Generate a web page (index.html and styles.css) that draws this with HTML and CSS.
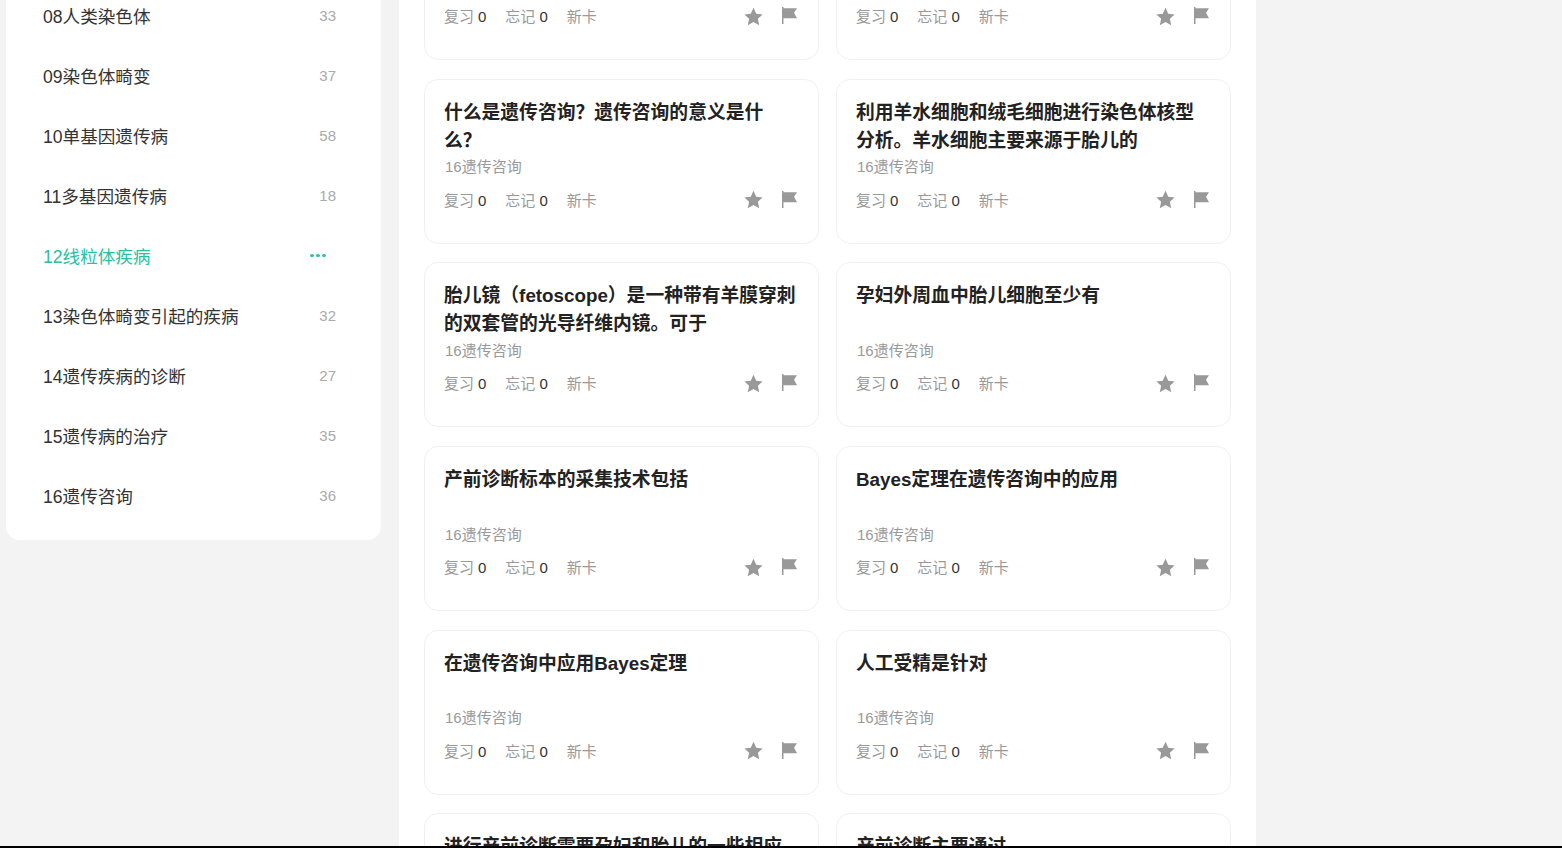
FILE: index.html
```html
<!DOCTYPE html>
<html lang="zh">
<head>
<meta charset="utf-8">
<title>遗传咨询</title>
<link rel="stylesheet" href="styles.css">
</head>
<body>
<div class="page">
  <aside class="sidebar">
    <ul class="chapters">
      <li class="chapter"><span>08人类染色体</span><span class="count">33</span></li>
      <li class="chapter"><span>09染色体畸变</span><span class="count">37</span></li>
      <li class="chapter"><span>10单基因遗传病</span><span class="count">58</span></li>
      <li class="chapter"><span>11多基因遗传病</span><span class="count">18</span></li>
      <li class="chapter active"><span>12线粒体疾病</span><span class="dots"><i></i><i></i><i></i></span></li>
      <li class="chapter"><span>13染色体畸变引起的疾病</span><span class="count">32</span></li>
      <li class="chapter"><span>14遗传疾病的诊断</span><span class="count">27</span></li>
      <li class="chapter"><span>15遗传病的治疗</span><span class="count">35</span></li>
      <li class="chapter"><span>16遗传咨询</span><span class="count">36</span></li>
    </ul>
  </aside>
  <main class="panel">
    <div class="grid">
      <article class="card"><h3></h3><p class="tag"></p><div class="row"><span class="k">复习</span><span class="v">0</span><span class="k gap">忘记</span><span class="v">0</span><span class="k gap">新卡</span><svg class="star" viewBox="0 0 20 20"><path d="M10 .8l2.9 6.2 6.7.8-5 4.6 1.4 6.7-6-3.4-6 3.4 1.4-6.7-5-4.6 6.7-.8z"/></svg><svg class="flag" viewBox="0 0 15 17"><path d="M0 0h1.5v17H0zM1.5 1.3H15l-3 4.5 3 5.5H1.5z"/></svg></div></article>
      <article class="card"><h3></h3><p class="tag"></p><div class="row"><span class="k">复习</span><span class="v">0</span><span class="k gap">忘记</span><span class="v">0</span><span class="k gap">新卡</span><svg class="star" viewBox="0 0 20 20"><path d="M10 .8l2.9 6.2 6.7.8-5 4.6 1.4 6.7-6-3.4-6 3.4 1.4-6.7-5-4.6 6.7-.8z"/></svg><svg class="flag" viewBox="0 0 15 17"><path d="M0 0h1.5v17H0zM1.5 1.3H15l-3 4.5 3 5.5H1.5z"/></svg></div></article>
      <article class="card"><h3>什么是遗传咨询？遗传咨询的意义是什么？</h3><p class="tag">16遗传咨询</p><div class="row"><span class="k">复习</span><span class="v">0</span><span class="k gap">忘记</span><span class="v">0</span><span class="k gap">新卡</span><svg class="star" viewBox="0 0 20 20"><path d="M10 .8l2.9 6.2 6.7.8-5 4.6 1.4 6.7-6-3.4-6 3.4 1.4-6.7-5-4.6 6.7-.8z"/></svg><svg class="flag" viewBox="0 0 15 17"><path d="M0 0h1.5v17H0zM1.5 1.3H15l-3 4.5 3 5.5H1.5z"/></svg></div></article>
      <article class="card"><h3>利用羊水细胞和绒毛细胞进行染色体核型分析。羊水细胞主要来源于胎儿的</h3><p class="tag">16遗传咨询</p><div class="row"><span class="k">复习</span><span class="v">0</span><span class="k gap">忘记</span><span class="v">0</span><span class="k gap">新卡</span><svg class="star" viewBox="0 0 20 20"><path d="M10 .8l2.9 6.2 6.7.8-5 4.6 1.4 6.7-6-3.4-6 3.4 1.4-6.7-5-4.6 6.7-.8z"/></svg><svg class="flag" viewBox="0 0 15 17"><path d="M0 0h1.5v17H0zM1.5 1.3H15l-3 4.5 3 5.5H1.5z"/></svg></div></article>
      <article class="card"><h3>胎儿镜（fetoscope）是一种带有羊膜穿刺的双套管的光导纤维内镜。可于</h3><p class="tag">16遗传咨询</p><div class="row"><span class="k">复习</span><span class="v">0</span><span class="k gap">忘记</span><span class="v">0</span><span class="k gap">新卡</span><svg class="star" viewBox="0 0 20 20"><path d="M10 .8l2.9 6.2 6.7.8-5 4.6 1.4 6.7-6-3.4-6 3.4 1.4-6.7-5-4.6 6.7-.8z"/></svg><svg class="flag" viewBox="0 0 15 17"><path d="M0 0h1.5v17H0zM1.5 1.3H15l-3 4.5 3 5.5H1.5z"/></svg></div></article>
      <article class="card"><h3>孕妇外周血中胎儿细胞至少有</h3><p class="tag">16遗传咨询</p><div class="row"><span class="k">复习</span><span class="v">0</span><span class="k gap">忘记</span><span class="v">0</span><span class="k gap">新卡</span><svg class="star" viewBox="0 0 20 20"><path d="M10 .8l2.9 6.2 6.7.8-5 4.6 1.4 6.7-6-3.4-6 3.4 1.4-6.7-5-4.6 6.7-.8z"/></svg><svg class="flag" viewBox="0 0 15 17"><path d="M0 0h1.5v17H0zM1.5 1.3H15l-3 4.5 3 5.5H1.5z"/></svg></div></article>
      <article class="card"><h3>产前诊断标本的采集技术包括</h3><p class="tag">16遗传咨询</p><div class="row"><span class="k">复习</span><span class="v">0</span><span class="k gap">忘记</span><span class="v">0</span><span class="k gap">新卡</span><svg class="star" viewBox="0 0 20 20"><path d="M10 .8l2.9 6.2 6.7.8-5 4.6 1.4 6.7-6-3.4-6 3.4 1.4-6.7-5-4.6 6.7-.8z"/></svg><svg class="flag" viewBox="0 0 15 17"><path d="M0 0h1.5v17H0zM1.5 1.3H15l-3 4.5 3 5.5H1.5z"/></svg></div></article>
      <article class="card"><h3>Bayes定理在遗传咨询中的应用</h3><p class="tag">16遗传咨询</p><div class="row"><span class="k">复习</span><span class="v">0</span><span class="k gap">忘记</span><span class="v">0</span><span class="k gap">新卡</span><svg class="star" viewBox="0 0 20 20"><path d="M10 .8l2.9 6.2 6.7.8-5 4.6 1.4 6.7-6-3.4-6 3.4 1.4-6.7-5-4.6 6.7-.8z"/></svg><svg class="flag" viewBox="0 0 15 17"><path d="M0 0h1.5v17H0zM1.5 1.3H15l-3 4.5 3 5.5H1.5z"/></svg></div></article>
      <article class="card"><h3>在遗传咨询中应用Bayes定理</h3><p class="tag">16遗传咨询</p><div class="row"><span class="k">复习</span><span class="v">0</span><span class="k gap">忘记</span><span class="v">0</span><span class="k gap">新卡</span><svg class="star" viewBox="0 0 20 20"><path d="M10 .8l2.9 6.2 6.7.8-5 4.6 1.4 6.7-6-3.4-6 3.4 1.4-6.7-5-4.6 6.7-.8z"/></svg><svg class="flag" viewBox="0 0 15 17"><path d="M0 0h1.5v17H0zM1.5 1.3H15l-3 4.5 3 5.5H1.5z"/></svg></div></article>
      <article class="card"><h3>人工受精是针对</h3><p class="tag">16遗传咨询</p><div class="row"><span class="k">复习</span><span class="v">0</span><span class="k gap">忘记</span><span class="v">0</span><span class="k gap">新卡</span><svg class="star" viewBox="0 0 20 20"><path d="M10 .8l2.9 6.2 6.7.8-5 4.6 1.4 6.7-6-3.4-6 3.4 1.4-6.7-5-4.6 6.7-.8z"/></svg><svg class="flag" viewBox="0 0 15 17"><path d="M0 0h1.5v17H0zM1.5 1.3H15l-3 4.5 3 5.5H1.5z"/></svg></div></article>
      <article class="card"><h3>进行产前诊断需要孕妇和胎儿的一些相应</h3></article>
      <article class="card"><h3>产前诊断主要通过</h3></article>
    </div>
  </main>
</div>
<div class="bottom-bar"></div>
</body>
</html>
```
FILE: styles.css
```css
* { box-sizing: border-box; }
html, body { height: 100%; margin: 0; overflow: hidden; }
body {
  background: #f3f3f3;
  font-family: "Liberation Sans", "Noto Sans CJK SC", sans-serif;
  color: #222;
}
.page {
  display: flex;
  align-items: flex-start;
  margin-top: -124px;
  padding-left: 6px;
}
.sidebar {
  flex: 0 0 375px;
  margin-right: 18px;
  background: #fff;
  border-radius: 0 0 14px 14px;
  padding-bottom: 15px;
}
.chapters { list-style: none; margin: 0; padding: 0 45px 0 37px; }
.chapter {
  display: flex;
  justify-content: space-between;
  align-items: center;
  height: 60px;
  font-size: 17.6px;
  color: #333;
}
.chapter:first-child { margin-top: 109px; }
.chapter.active { color: #26c1a0; }
.count { font-size: 15px; color: #aaa; }
.dots { display: flex; gap: 2px; margin-right: 10px; padding-top: 1px; }
.dots i { width: 4px; height: 3px; border-radius: 50%; background: #26c1a0; }
.panel {
  flex: 0 0 857px;
  background: #fff;
  padding: 19.05px 25px 0;
  height: 1000px;
}
.grid {
  display: grid;
  grid-template-columns: 395px 395px;
  column-gap: 17px;
  row-gap: 18.9px;
}
.card {
  height: 164.8px;
  border: 1px solid #f1f1f1;
  border-radius: 14px;
  padding: 19px 19px 0;
}
.card h3 {
  margin: 0;
  height: 56px;
  font-size: 18.8px;
  line-height: 27.8px;
  font-weight: 700;
  color: #222;
}
.tag { margin: 2.6px 0 0 1px; min-height: 20px; font-size: 15px; line-height: 20px; color: #999; }
.row {
  display: flex;
  align-items: center;
  margin-top: 13.4px;
  font-size: 15px;
  line-height: 20px;
}
.k { color: #999; }
.v { margin-left: 4px; color: #333; }
.gap { margin-left: 19px; }
.star { width: 19px; height: 19px; margin: -2px 0 0 auto; fill: #999; }
.flag { width: 15px; height: 17px; margin: -3px 2px 0 19px; fill: #999; }
.bottom-bar { position: fixed; left: 0; right: 0; bottom: 0; height: 2px; background: #000; }
```
